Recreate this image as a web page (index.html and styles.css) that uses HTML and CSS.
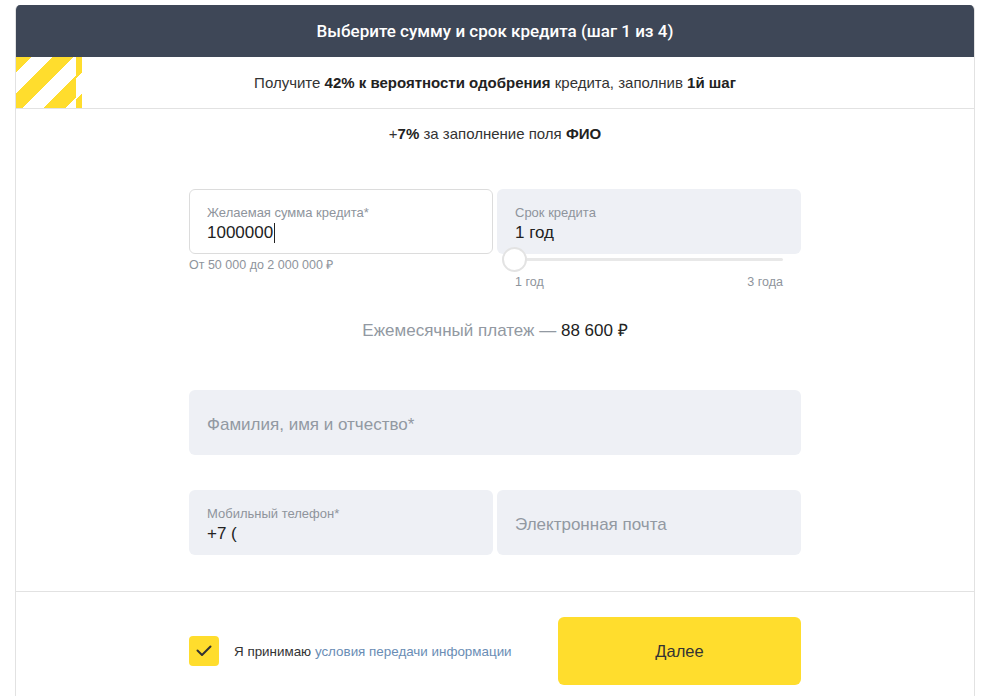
FILE: index.html
```html
<!DOCTYPE html>
<html lang="ru">
<head>
<meta charset="utf-8">
<title>Кредит</title>
<link rel="stylesheet" href="styles.css">
</head>
<body>
<div class="card">
  <div class="head">Выберите сумму и срок кредита (шаг 1 из 4)</div>
  <div class="promo">
    <div class="stripes"></div>
    <div class="promo-text">Получите <b>42% к вероятности одобрения</b> кредита, заполнив <b>1й шаг</b></div>
    <div></div>
  </div>
  <div class="main">
    <div class="bonus">+<b>7%</b> за заполнение поля <b>ФИО</b></div>
    <div class="form">
      <div class="row2">
        <div class="col">
          <div class="field field-white">
            <div class="label">Желаемая сумма кредита*</div>
            <div class="value">1000000<span class="caret"></span></div>
          </div>
          <div class="hint">От 50 000 до 2 000 000 ₽</div>
        </div>
        <div class="col">
          <div class="field">
            <div class="label">Срок кредита</div>
            <div class="value">1 год</div>
          </div>
          <div class="slider">
            <div class="track"></div>
            <div class="thumb"></div>
            <div class="ticks"><span>1 год</span><span>3 года</span></div>
          </div>
        </div>
      </div>
      <div class="payment">Ежемесячный платеж — <span class="sum">88 600 ₽</span></div>
      <div class="field field-ph fio">Фамилия, имя и отчество*</div>
      <div class="row2 row3">
        <div class="field">
          <div class="label">Мобильный телефон*</div>
          <div class="value">+7 (</div>
        </div>
        <div class="field field-ph">Электронная почта</div>
      </div>
    </div>
  </div>
  <div class="foot">
    <div class="foot-inner">
      <div class="agree">
        <div class="check"><svg width="30" height="30" viewBox="0 0 30 30"><polyline points="8.5,14.5 13,19 21.5,10.5" fill="none" stroke="#333" stroke-width="2" stroke-linecap="round" stroke-linejoin="round"/></svg></div>
        <div class="agree-text">Я принимаю <a class="link">условия передачи информации</a></div>
      </div>
      <button class="btn">Далее</button>
    </div>
  </div>
</div>
</body>
</html>
```
FILE: styles.css
```css
* { box-sizing: border-box; }
html, body { margin: 0; padding: 0; background: #fff; }
body {
  font-family: "Liberation Sans", Arial, sans-serif;
  color: #333;
  padding-top: 5px;
}
.card {
  margin: 0 15px;
  border-left: 1px solid #e2e2e2;
  border-right: 1px solid #e2e2e2;
  border-radius: 5px 5px 0 0;
  overflow: hidden;
}
.head {
  height: 52px;
  background: #3e4757;
  color: #fff;
  font-family: Roboto, "Liberation Sans", sans-serif;
  font-size: 17px;
  font-weight: 500;
  display: flex;
  align-items: center;
  justify-content: center;
  margin: 0 -1px;
}
.promo {
  height: 52px;
  border-bottom: 1px solid #e2e2e2;
  display: grid;
  grid-template-columns: 66px 1fr 66px;
  align-items: center;
}
.stripes {
  height: 51px;
  background: repeating-linear-gradient(135deg, #ffdd2d 0 15px, #fff 15px 30px);
  background-position: -6px 0;
}
.promo-text {
  text-align: center;
  font-size: 15px;
  color: #333;
}
.promo-text b, .bonus b { font-weight: 700; color: #222; }
.main {
  padding: 15px 0 36px;
}
.bonus {
  text-align: center;
  font-size: 15px;
  line-height: 20px;
}
.form {
  width: 612px;
  margin: 45px auto 0;
}
.row2 {
  display: grid;
  grid-template-columns: 1fr 1fr;
  gap: 4px;
}
.field {
  height: 65px;
  border-radius: 6px;
  background: #eef0f5;
  padding: 16px 18px 0;
}
.field-white {
  background: #fff;
  border: 1px solid #dcdcdc;
  padding: 15px 17px 0;
}
.label {
  font-size: 13px;
  line-height: 16px;
  color: #8e949c;
  margin-bottom: 2px;
}
.value {
  font-size: 17px;
  line-height: 20px;
  color: #222;
  display: flex;
  align-items: center;
}
.caret {
  display: inline-block;
  width: 1px;
  height: 20px;
  background: #222;
  margin-left: 1px;
}
.hint {
  margin-top: 3px;
  font-size: 12.5px;
  line-height: 16px;
  color: #8e949c;
}
.slider {
  position: relative;
  height: 36px;
  padding: 20px 18px 0;
}
.track {
  position: absolute;
  left: 10px;
  right: 18px;
  top: 4px;
  height: 3px;
  background: #e8e8e8;
  border-radius: 2px;
}
.thumb {
  position: absolute;
  left: 5px;
  top: -7px;
  width: 25px;
  height: 25px;
  border-radius: 50%;
  background: #fff;
  border: 2px solid #e3e3e3;
}
.ticks {
  display: flex;
  justify-content: space-between;
  font-size: 12.5px;
  line-height: 16px;
  color: #8e949c;
}
.payment {
  margin-top: 31px;
  text-align: center;
  font-size: 17px;
  line-height: 20px;
  color: #9299a2;
}
.payment .sum { color: #222; }
.field-ph {
  display: flex;
  align-items: center;
  padding-top: 5px;
  font-size: 17px;
  color: #9299a2;
}
.fio {
  margin-top: 49px;
}
.row3 {
  margin-top: 35px;
}
.foot {
  border-top: 1px solid #e2e2e2;
  padding: 25px 0 25px;
}
.foot-inner {
  width: 612px;
  margin: 0 auto;
  display: flex;
  align-items: center;
  justify-content: space-between;
}
.agree {
  display: flex;
  align-items: center;
  gap: 15px;
}
.check {
  width: 30px;
  height: 30px;
  border-radius: 4px;
  background: #ffdd2d;
}
.check svg { display: block; }
.agree-text {
  font-size: 13.4px;
  color: #333;
}
.link {
  color: #6a8db5;
  text-decoration: none;
}
.btn {
  width: 243px;
  height: 68px;
  border: 0;
  border-radius: 6px;
  background: #ffdd2d;
  font-family: inherit;
  font-size: 16.5px;
  color: #333;
}
```
